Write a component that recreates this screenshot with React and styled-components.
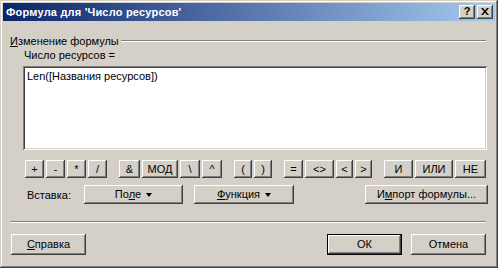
import React from "react";
import styled, { createGlobalStyle } from "styled-components";

const Global = createGlobalStyle`
  html, body { margin: 0; padding: 0; background: #D4D0C8; }
  body { font-family: "Liberation Sans", Arial, sans-serif; font-size: 11px; color: #000; }
`;

const Window = styled.div`
  width: 498px;
  height: 268px;
  box-sizing: border-box;
  padding: 3px;
  background: #d4d0c8;
  box-shadow: inset -1px -1px #404040, inset 1px 1px #d4d0c8,
    inset -2px -2px #808080, inset 2px 2px #ffffff;
  display: flex;
  flex-direction: column;
`;

const TitleBar = styled.div`
  height: 18px;
  flex: none;
  display: flex;
  align-items: center;
  justify-content: space-between;
  padding: 0 2px 0 3px;
  background: linear-gradient(to right, #0a246a, #a6caf0);
`;

const Title = styled.span`
  color: #fff;
  font-weight: bold;
  font-size: 11px;
  letter-spacing: 0.2px;
`;

const CaptionButtons = styled.div`
  display: flex;
  gap: 2px;
`;

const CaptionButton = styled.div`
  width: 16px;
  height: 14px;
  box-sizing: border-box;
  background: #d4d0c8;
  box-shadow: inset -1px -1px #404040, inset 1px 1px #ffffff,
    inset -2px -2px #808080, inset 2px 2px #d4d0c8;
  display: flex;
  align-items: center;
  justify-content: center;
  font-weight: bold;
  font-size: 11px;
  line-height: 1;
  padding-bottom: 1px;
`;

const Body = styled.div`
  flex: 1;
  display: flex;
  flex-direction: column;
  padding: 0 9px 0 7px;
`;

const GroupHeader = styled.div`
  margin-top: 13px;
  height: 13px;
  display: flex;
  align-items: center;
  gap: 2px;
`;

const Line = styled.div`
  flex: 1;
  height: 0;
  border-top: 1px solid #808080;
  border-bottom: 1px solid #ffffff;
`;

const GroupBody = styled.div`
  display: flex;
  flex-direction: column;
  padding-left: 13px;
  margin-right: -1px;
`;

const FieldLabel = styled.div`
  margin-top: 2px;
  padding-left: 1px;
  height: 13px;
  line-height: 13px;
`;

const Formula = styled.div`
  margin-top: 4px;
  height: 84px;
  box-sizing: border-box;
  background: #fff;
  padding: 4px 4px;
  box-shadow: inset 1px 1px #808080, inset -1px -1px #ffffff,
    inset 2px 2px #404040, inset -2px -2px #d4d0c8;
  line-height: 13px;
`;

const OpsRow = styled.div`
  margin-top: 10px;
  padding-left: 2px;
  margin-right: 1px;
  display: flex;
  justify-content: space-between;
`;

const OpGroup = styled.div`
  display: flex;
  gap: 2px;
`;

const Button = styled.div`
  width: ${(p) => p.$w}px;
  height: ${(p) => p.$h || 18}px;
  box-sizing: border-box;
  background: #d4d0c8;
  box-shadow: ${(p) =>
    p.$default
      ? "inset 1px 1px #000, inset -1px -1px #000, inset -2px -2px #404040, inset 2px 2px #ffffff, inset -3px -3px #808080"
      : "inset -1px -1px #404040, inset 1px 1px #ffffff, inset -2px -2px #808080, inset 2px 2px #d4d0c8"};
  display: flex;
  align-items: center;
  justify-content: center;
  gap: 5px;
  white-space: nowrap;
  line-height: 1;
`;

const InsertRow = styled.div`
  margin-top: 7px;
  display: flex;
  align-items: center;
  padding-left: 17px;
  margin-right: -2px;
`;

const InsertLabel = styled.span`
  width: 57px;
`;

const Spacer = styled.div`
  flex: 1;
`;

const Separator = styled.div`
  margin-top: 17px;
  height: 0;
  border-top: 1px solid #808080;
  border-bottom: 1px solid #ffffff;
`;

const Footer = styled.div`
  margin-top: 11px;
  display: flex;
  align-items: center;
  padding-left: 1px;
  gap: 9px;
`;

const Arrow = styled.span`
  width: 0;
  height: 0;
  border-left: 3.5px solid transparent;
  border-right: 3.5px solid transparent;
  border-top: 4px solid #000;
`;

const U = styled.span`
  text-decoration: underline;
`;

const ops = [
  [["+", 19], ["-", 19], ["*", 19], ["/", 19]],
  [["&", 21], ["МОД", 36], ["\\", 20], ["^", 20]],
  [["(", 18], [")", 18]],
  [["=", 19], ["<>", 29], ["<", 17], [">", 17]],
  [["И", 29], ["ИЛИ", 38], ["НЕ", 31]],
];

export default function App() {
  return (
    <>
      <Global />
      <Window>
        <TitleBar>
          <Title>Формула для 'Число ресурсов'</Title>
          <CaptionButtons>
            <CaptionButton>?</CaptionButton>
            <CaptionButton>
              <svg width="8" height="7" viewBox="0 0 8 7">
                <path d="M0 0h2l2 2.5L6 0h2L5 3.5 8 7H6L4 4.5 2 7H0l3-3.5z" fill="#000" />
              </svg>
            </CaptionButton>
          </CaptionButtons>
        </TitleBar>
        <Body>
          <GroupHeader>
            <span>
              <U>И</U>зменение формулы
            </span>
            <Line />
          </GroupHeader>
          <GroupBody>
            <FieldLabel>Число ресурсов =</FieldLabel>
            <Formula>Len([Названия ресурсов])</Formula>
            <OpsRow>
              {ops.map((g, i) => (
                <OpGroup key={i}>
                  {g.map(([t, w]) => (
                    <Button key={t} $w={w}>
                      {t}
                    </Button>
                  ))}
                </OpGroup>
              ))}
            </OpsRow>
          </GroupBody>
          <InsertRow>
            <InsertLabel>Вставка:</InsertLabel>
            <Button $w={99} $h={19}>
              <span>
                По<U>л</U>е
              </span>
              <Arrow />
            </Button>
            <Button $w={100} $h={19} style={{ marginLeft: 11 }}>
              <span>
                <U>Ф</U>ункция
              </span>
              <Arrow />
            </Button>
            <Spacer />
            <Button $w={123} $h={19}>
              <span>
                И<U>м</U>порт формулы...
              </span>
            </Button>
          </InsertRow>
          <Separator />
          <Footer>
            <Button $w={75} $h={21}>
              <span>
                <U>С</U>правка
              </span>
            </Button>
            <Spacer />
            <Button $w={75} $h={21} $default>
              ОК
            </Button>
            <Button $w={75} $h={21}>
              Отмена
            </Button>
          </Footer>
        </Body>
      </Window>
    </>
  );
}
